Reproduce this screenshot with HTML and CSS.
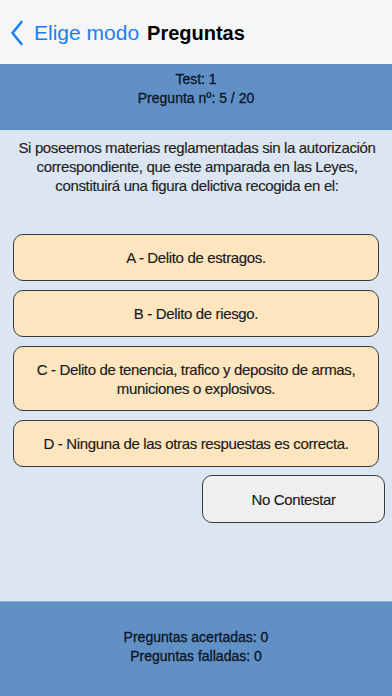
FILE: index.html
```html
<!DOCTYPE html>
<html lang="es">
<head>
<meta charset="utf-8">
<title>Preguntas</title>
<link rel="stylesheet" href="styles.css">
</head>
<body>
<div class="screen">
  <header class="navbar">
    <a class="back">
      <svg class="chevron" width="14" height="26" viewBox="0 0 14 26"><path d="M11.5 2 L2.5 13 L11.5 24" fill="none" stroke="#1a7ff0" stroke-width="2.6" stroke-linecap="round" stroke-linejoin="round"/></svg>
      <span class="back-label">Elige modo</span>
    </a>
    <h1 class="title">Preguntas</h1>
  </header>
  <section class="info">
    <div>Test: 1</div>
    <div>Pregunta nº: 5 / 20</div>
  </section>
  <main class="content">
    <p class="question">Si poseemos materias reglamentadas sin la autorización correspondiente, que este amparada en las Leyes, constituirá una figura delictiva recogida en el:</p>
    <div class="options">
      <button class="option">A - Delito de estragos.</button>
      <button class="option">B - Delito de riesgo.</button>
      <button class="option tall">C - Delito de tenencia, trafico y deposito de armas, municiones o explosivos.</button>
      <button class="option">D - Ninguna de las otras respuestas es correcta.</button>
    </div>
    <div class="skip-row">
      <button class="skip">No Contestar</button>
    </div>
  </main>
  <footer class="stats">
    <div>Preguntas acertadas: 0</div>
    <div>Preguntas falladas: 0</div>
  </footer>
</div>
</body>
</html>
```
FILE: styles.css
```css
* { box-sizing: border-box; }
html, body { margin: 0; padding: 0; }
body {
  font-family: "Liberation Sans", Arial, sans-serif;
  color: #1c1c1c;
  background: #dce6f2;
}
.screen {
  width: 392px;
  height: 696px;
  display: flex;
  flex-direction: column;
  background: #dce6f2;
}
.navbar {
  height: 64px;
  background: #f5f6f8;
  display: flex;
  align-items: center;
  padding: 2px 0 0 10px;
  gap: 8px;
}
.back {
  display: flex;
  align-items: center;
  gap: 10px;
  color: #1a7ff0;
}
.chevron { display: block; }
.back-label {
  font-size: 21px;
  line-height: 24px;
}
.title {
  margin: 0;
  font-size: 20px;
  font-weight: bold;
  line-height: 24px;
  color: #000;
}
.info {
  height: 66px;
  background: #6090c5;
  border-bottom: 1px solid #5a86b8;
  display: flex;
  flex-direction: column;
  align-items: center;
  justify-content: flex-start;
  padding-top: 6px;
  font-size: 14px;
  line-height: 19px;
  color: #0c1624;
  -webkit-text-stroke: 0.3px #0c1624;
}
.content {
  flex: 1;
  padding: 8px 7px 0 13px;
}
.question {
  margin: 0 0 39px;
  text-align: center;
  font-size: 15px;
  letter-spacing: -0.35px;
  line-height: 19px;
  color: #1e1e1e;
  padding: 0 4px 0 0;
  -webkit-text-stroke: 0.15px #1e1e1e;
}
.options {
  display: flex;
  flex-direction: column;
  gap: 9px;
  padding-right: 6px;
}
.option, .skip {
  font-family: "Liberation Sans", Arial, sans-serif;
  font-size: 15px;
  letter-spacing: -0.35px;
  line-height: 19px;
  color: #1a1a1a;
  -webkit-text-stroke: 0.15px #1a1a1a;
  border: 1.5px solid #3a3a3a;
  border-radius: 10px;
  text-align: center;
  padding: 0 18px;
  margin: 0;
}
.option {
  background: #fde5bf;
  height: 47px;
}
.option.tall { height: 65px; }
.skip-row {
  display: flex;
  justify-content: flex-end;
  margin-top: 8px;
}
.skip {
  width: 183px;
  height: 48px;
  background: #efeff0;
}
.stats {
  height: 95px;
  background: #6090c5;
  border-top: 1px solid #8aaed6;
  display: flex;
  flex-direction: column;
  align-items: center;
  justify-content: center;
  padding-bottom: 5px;
  font-size: 14px;
  line-height: 19px;
  color: #0c1624;
  -webkit-text-stroke: 0.3px #0c1624;
}
```
